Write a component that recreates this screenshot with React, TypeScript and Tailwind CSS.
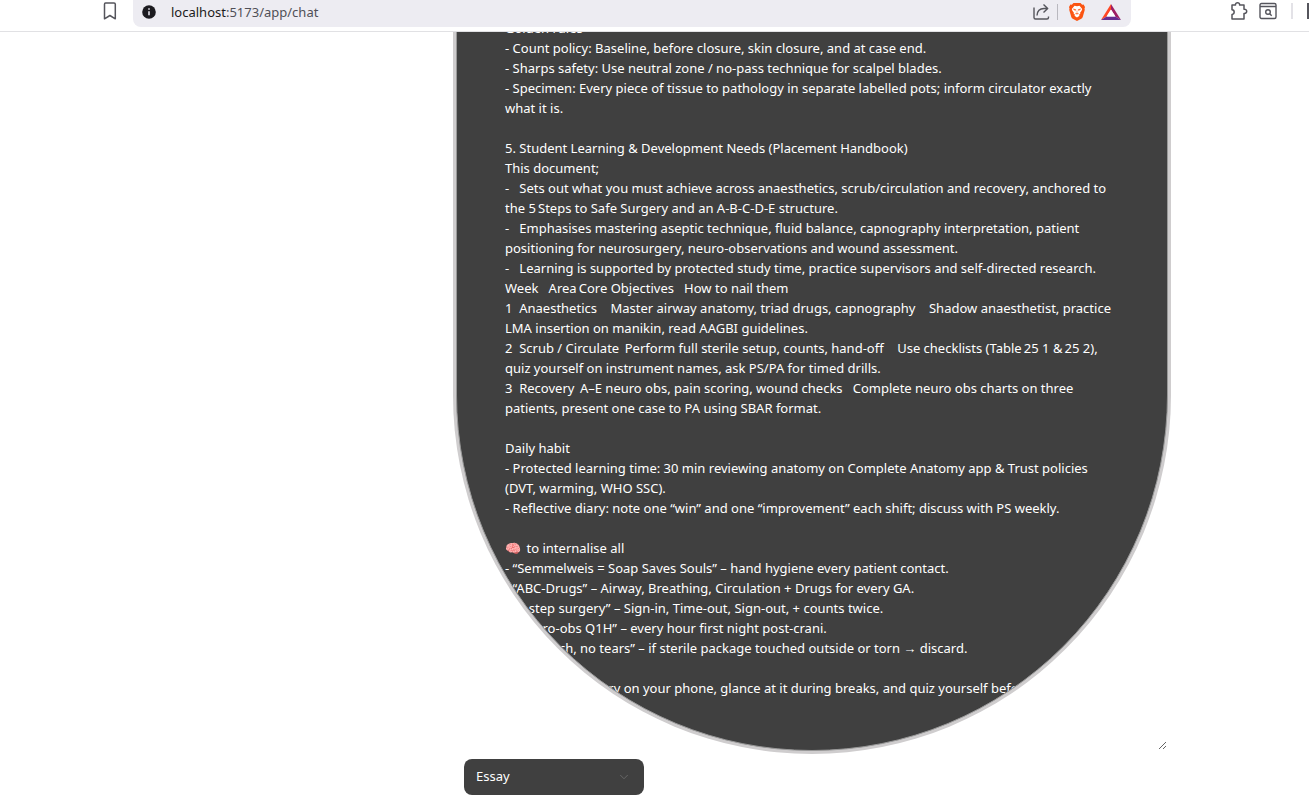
import { useState } from "react";
import { ChevronDown } from "lucide-react";

const NOTES = [
  "Golden rules",
  "- Count policy: Baseline, before closure, skin closure, and at case end.",
  "- Sharps safety: Use neutral zone / no-pass technique for scalpel blades.",
  "- Specimen: Every piece of tissue to pathology in separate labelled pots; inform circulator exactly",
  "what it is.",
  "",
  "5. Student Learning & Development Needs (Placement Handbook)",
  "This document;",
  "-\u00a0\u00a0 Sets out what you must achieve across anaesthetics, scrub/circulation and recovery, anchored to",
  "the 5\u2009Steps to Safe Surgery and an A-B-C-D-E structure.",
  "-\u00a0\u00a0 Emphasises mastering aseptic technique, fluid balance, capnography interpretation, patient",
  "positioning for neurosurgery, neuro-observations and wound assessment.",
  "-\u00a0\u00a0 Learning is supported by protected study time, practice supervisors and self-directed research.",
  "Week\u00a0\u00a0 Area\u2009Core Objectives\u00a0\u00a0 How to nail them",
  "1\u00a0 Anaesthetics\u00a0\u00a0\u00a0 Master airway anatomy, triad drugs, capnography\u00a0\u00a0\u00a0 Shadow anaesthetist, practice",
  "LMA insertion on manikin, read AAGBI guidelines.",
  "2\u00a0 Scrub / Circulate\u2009 Perform full sterile setup, counts, hand-off\u00a0\u00a0\u00a0 Use checklists (Table\u200925 1 &\u200925 2),",
  "quiz yourself on instrument names, ask PS/PA for timed drills.",
  "3\u00a0 Recovery\u2009 A–E neuro obs, pain scoring, wound checks\u00a0\u00a0 Complete neuro obs charts on three",
  "patients, present one case to PA using SBAR format.",
  "",
  "Daily habit",
  "- Protected learning time: 30 min reviewing anatomy on Complete Anatomy app & Trust policies",
  "(DVT, warming, WHO SSC).",
  "- Reflective diary: note one “win” and one “improvement” each shift; discuss with PS weekly.",
  "",
  "🧠\u2009 to internalise all",
  "- “Semmelweis = Soap Saves Souls” – hand hygiene every patient contact.",
  "- “ABC-Drugs” – Airway, Breathing, Circulation + Drugs for every GA.",
  "- “5-step surgery” – Sign-in, Time-out, Sign-out, + counts twice.",
  "- “Neuro-obs Q1H” – every hour first night post-crani.",
  "- “No touch, no tears” – if sterile package touched outside or torn → discard.",
  "",
  "Save this summary on your phone, glance at it during breaks, and quiz yourself before",
].join("\n");

function BrowserBar() {
  return (
    <header className="flex h-8 shrink-0 items-start overflow-hidden border-b border-[#e1e1e4] bg-white pl-[101px] text-[#55555c]">
      <button aria-label="Bookmark" className="flex h-[22px] w-4 shrink-0 items-center justify-center">
        <svg width="16" height="20" viewBox="0 0 16 20" fill="none" stroke="currentColor" strokeWidth="1.5" strokeLinejoin="round">
          <path d="M4.500 2h8.500c.8 0 1.300.5 1.300 1.300V17.800L8.900 14.500l-5.400 3.300V3.300C3.500 2.500 3.700 2 4.500 2z" />
        </svg>
      </button>
      <div className="ml-4 flex h-[27px] min-w-0 flex-1 items-center rounded-b-lg bg-[#edecf2] pr-[10px] pb-1">
        <button aria-label="Site information" className="ml-2 shrink-0">
          <svg width="16" height="16" viewBox="0 0 16 16">
            <circle cx="8" cy="8" r="6.800" fill="#1c1b20" />
            <path d="M8 7.200v4M8 4.200v1.600" stroke="#edecf2" strokeWidth="1.500" />
          </svg>
        </button>
        <a href="http://localhost:5173/app/chat" className="ml-[14px] min-w-0 flex-1 truncate text-[13px] leading-5 text-[#505057]">
          <span className="text-[#1c1b20]">localhost</span>:5173/app/chat
        </a>
        <button aria-label="Share" className="shrink-0">
          <svg width="18" height="18" viewBox="0 0 18 18" fill="none" stroke="currentColor" strokeWidth="1.400" strokeLinejoin="round">
            <path d="M2 4.500v10c0 1 .5 1.500 1.500 1.500H15c1 0 1.500-.500 1.500-1.500V13.500" />
            <path d="M5 12.500c.3-4.500 2.700-7 7-7h3.500M11.500 1.500l4.200 4-4.200 4" />
          </svg>
        </button>
        <span className="mr-2 ml-[7px] h-4 w-px shrink-0 bg-[#b9b8bf]" />
        <button aria-label="Brave Shields" className="ml-[3px] shrink-0">
          <svg width="16" height="18" viewBox="0 0 16 18">
            <path d="M4.500 0h7l1.700 1.700 1.400-.2L16 4l-.5 1.700.3 1-2 7c-.3.900-.8 1.500-1.500 2L8 18l-4.300-2.300c-.7-.500-1.200-1.100-1.500-2l-2-7 .3-1L0 4l1.400-2.500 1.400.2z" fill="#fb5412" />
            <path d="M5.500 2.800 8 3.300l2.500-.5 2.700 3.100-.6 1.800-1.500 2 .2 1.300-1.600.8.900 1L8 14.500l-2.600-1.700.9-1-1.600-.8.200-1.300-1.500-2-.6-1.800z" fill="#fff" />
            <path d="m4.300 6 2.500.6-.5 1zM11.700 6l-2.500.6.5 1zM8 7.500v2.700M6.300 10.300 8 11.200l1.700-.9" fill="#fb5412" stroke="#fb5412" strokeWidth=".5" />
          </svg>
        </button>
        <button aria-label="Brave Rewards" className="ml-4 shrink-0">
          <svg width="20" height="16" viewBox="0 0 18 16" preserveAspectRatio="none">
            <path d="M9 0 0 16l5-3.500L9 5.500z" fill="#ff4724" />
            <path d="m9 0 9 16-5-3.500L9 5.500z" fill="#9e1f63" />
            <path d="M0 16h18l-5-3.500H5z" fill="#662d91" />
            <path d="M9 5.500 5 12.500h8z" fill="#fff" />
          </svg>
        </button>
      </div>
      <div className="ml-[98px] flex h-[22px] shrink-0 items-center">
        <button aria-label="Extensions">
          <svg width="20" height="20" viewBox="0 0 20 20" fill="none" stroke="currentColor" strokeWidth="1.500" strokeLinejoin="round">
            <path d="M3 4h3.500c-.4-3 4.500-3 4.100 0H15v4.200c3.600-.5 3.600 4.700 0 4.200V18H3v-4.600c2.900-.2 2.900-4.500 0-4.700z" />
          </svg>
        </button>
        <button aria-label="Search tabs" className="ml-[10px]">
          <svg width="18" height="18" viewBox="0 0 18 18" fill="none" stroke="currentColor" strokeWidth="1.400">
            <rect x="1" y="1.500" width="16" height="15" rx="1.500" />
            <path d="M1 4.500h16M10.700 11.700l2 2" />
            <circle cx="9" cy="10" r="2.300" />
          </svg>
        </button>
        <span className="mx-[14px] h-4 w-[2px] bg-[#e3e2e7]" />
        <span className="h-4 w-[2px] bg-[#55555c]" />
      </div>
    </header>
  );
}

export default function App() {
  const [notes, setNotes] = useState(NOTES);
  const [kind, setKind] = useState("Essay");

  return (
    <div className="flex h-screen flex-col overflow-hidden bg-white font-['Segoe_UI','Noto_Sans',sans-serif]">
      <BrowserBar />
      <main className="flex min-h-0 flex-1 flex-col justify-end overflow-hidden pr-[141px] pb-[10px] pl-[456px]">
        <textarea
          aria-label="Message"
          value={notes}
          onChange={(event) => setNotes(event.target.value)}
          rows={34}
          wrap="off"
          className="block w-full shrink-0 resize overflow-hidden rounded-b-full border border-[#999] bg-[#404040] px-12 pt-12 pb-[52px] text-[13px] leading-5 text-white ring-3 ring-[#cfcdce] outline-none"
        />
        <div className="mt-2 ml-2 grid w-[180px] shrink-0 items-center">
          <select
            aria-label="Writing type"
            value={kind}
            onChange={(event) => setKind(event.target.value)}
            className="col-start-1 row-start-1 h-9 w-full appearance-none rounded-lg bg-[#404040] px-3 text-[13px] text-white"
          >
            <option>Essay</option>
            <option>Report</option>
            <option>Summary</option>
          </select>
          <ChevronDown size={14} strokeWidth={1.5} className="pointer-events-none col-start-1 row-start-1 mr-[13px] justify-self-end text-[#6b6b6b]" />
        </div>
      </main>
    </div>
  );
}
